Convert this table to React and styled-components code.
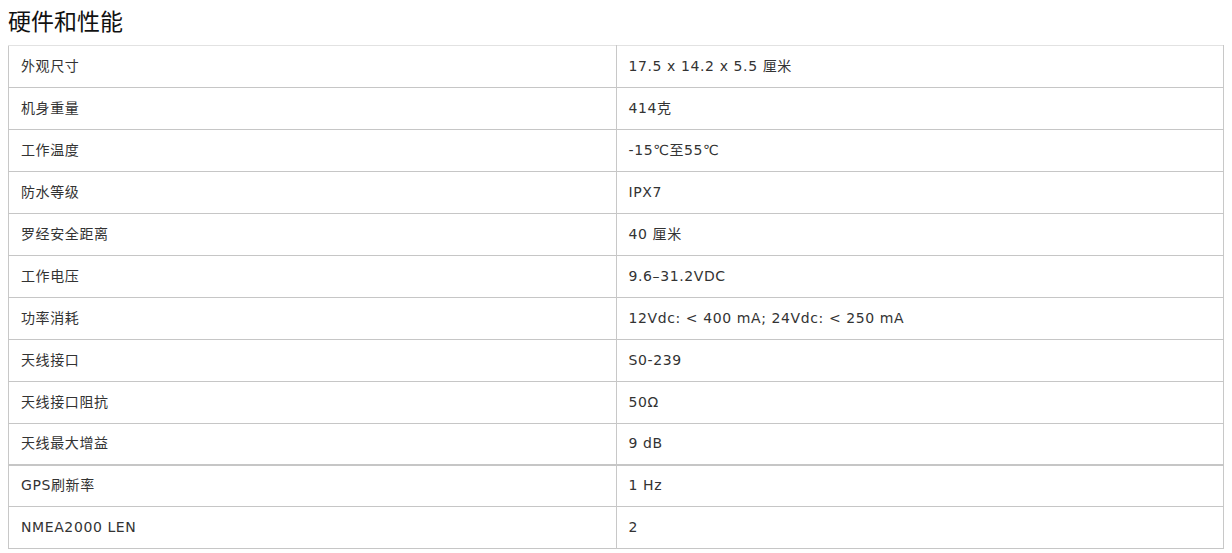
import React from "react";
import styled, { createGlobalStyle } from "styled-components";

const GlobalStyle = createGlobalStyle`
  html, body { margin: 0; padding: 0; background: #fff; }
  body { font-family: "DejaVu Sans", "Noto Sans CJK SC", sans-serif; color: #333; }
`;

const Page = styled.div`
  padding: 5px 8px 8px 8px;
`;

const Title = styled.h2`
  margin: 0 0 10px 0;
  font-family: "Noto Sans CJK SC", "Noto Sans", sans-serif;
  font-size: 23px;
  line-height: 30px;
  font-weight: 400;
  color: #111;
`;

const Table = styled.table`
  width: 100%;
  border-collapse: collapse;
  table-layout: fixed;
  border-top: 1px solid #e2e2e2;
  border-left: 1px solid #c8c8c8;
  border-right: 1px solid #c8c8c8;
`;

const Row = styled.tr`
  border-bottom: ${(p) => (p.$thick ? "2px" : "1px")} solid #c6c6c6;
`;

const Cell = styled.td`
  height: ${(p) => (p.$short ? "41px" : "42px")};
  padding: 0 12px;
  box-sizing: border-box;
  font-size: 14px;
  line-height: 21px;
  color: #333;
  vertical-align: middle;
  letter-spacing: 0.6px;
  & + & {
    border-left: 1px solid #c8c8c8;
  }
`;

const rows = [
  ["外观尺寸", "17.5 x 14.2 x 5.5 厘米"],
  ["机身重量", "414克"],
  ["工作温度", "-15℃至55℃"],
  ["防水等级", "IPX7"],
  ["罗经安全距离", "40 厘米"],
  ["工作电压", "9.6–31.2VDC"],
  ["功率消耗", "12Vdc: < 400 mA; 24Vdc: < 250 mA"],
  ["天线接口", "S0-239"],
  ["天线接口阻抗", "50Ω"],
  ["天线最大增益", "9 dB"],
  ["GPS刷新率", "1 Hz"],
  ["NMEA2000 LEN", "2"],
];

export default function App() {
  return (
    <>
      <GlobalStyle />
      <Page>
        <Title>硬件和性能</Title>
        <Table>
          <tbody>
            {rows.map(([k, v], i) => (
              <Row key={k} $thick={i === 9}>
                <Cell $short={i === 9}>{k}</Cell>
                <Cell $short={i === 9}>{v}</Cell>
              </Row>
            ))}
          </tbody>
        </Table>
      </Page>
    </>
  );
}
